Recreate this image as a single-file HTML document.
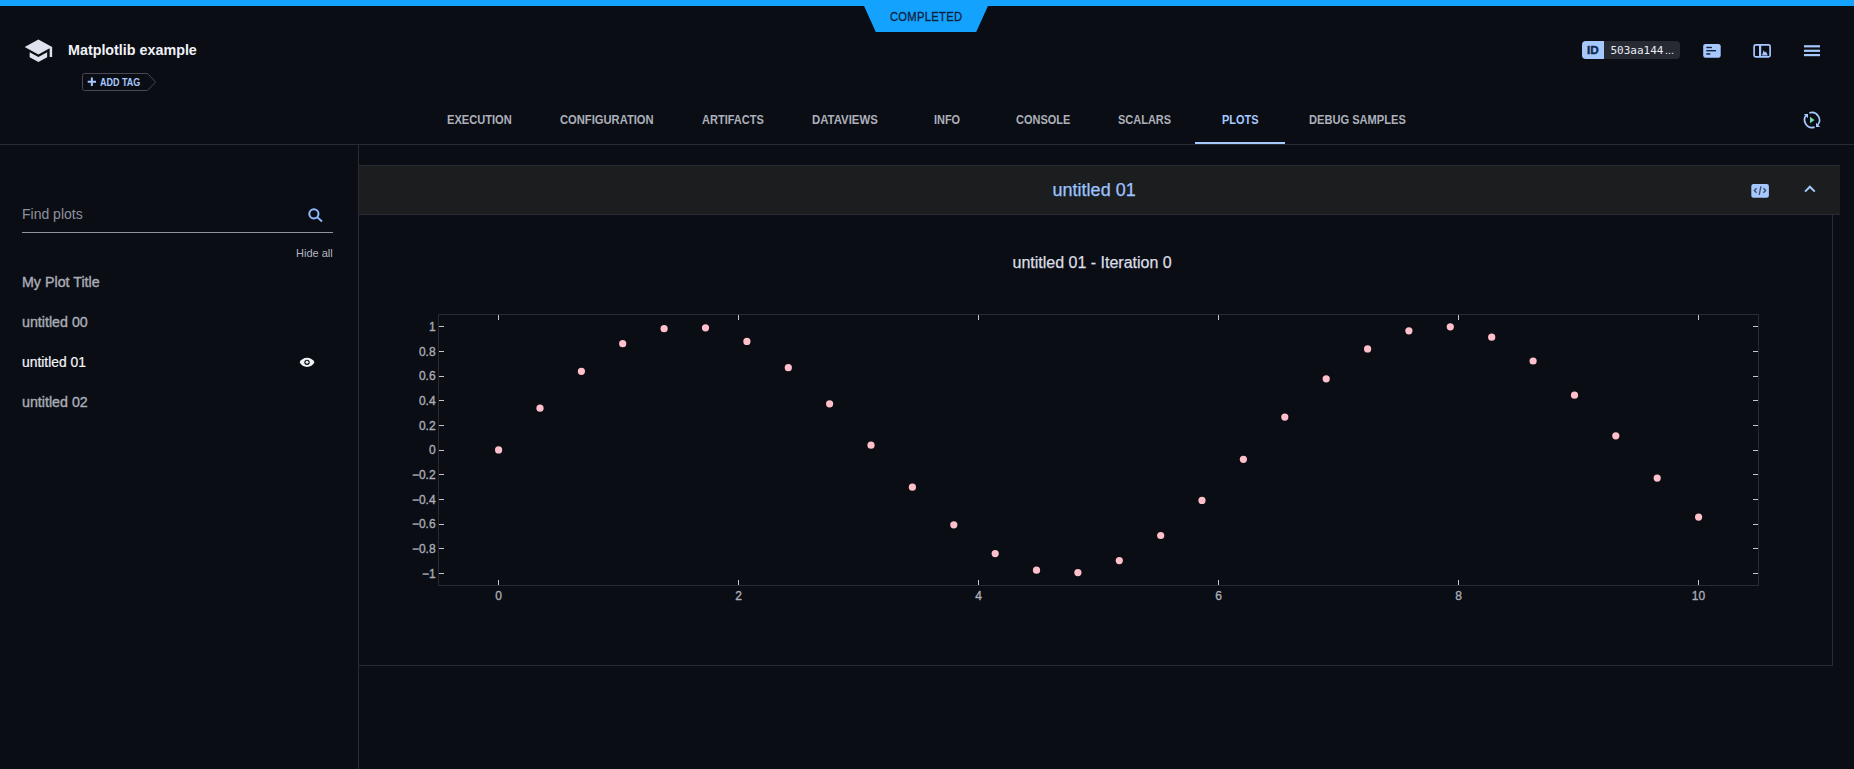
<!DOCTYPE html>
<html lang="en"><head><meta charset="utf-8"><title>Matplotlib example</title>
<style>
html,body{margin:0;padding:0}
body{width:1854px;height:769px;overflow:hidden;background:#0a0d14;font-family:"Liberation Sans",sans-serif;position:relative;color:#c3c6d2}
.a{position:absolute}
.t{position:absolute;white-space:nowrap;line-height:1;transform-origin:0 50%}
.tab{font-size:12px;font-weight:bold;color:#adb0ba;top:114px;transform:scaleX(0.925)}
.li{font-size:15px;color:#a9acb6;left:22px;-webkit-text-stroke:0.4px #a9acb6;transform:scaleX(0.95)}
svg{position:absolute;left:0;top:0;overflow:visible}
</style></head><body>
<!-- top status bar -->
<div class="a" style="left:0;top:0;width:1854px;height:6px;background:#14a2ff"></div>
<svg width="1854" height="40"><polygon points="863.6,5 988.4,5 976.2,32 875.8,32" fill="#14a2ff"/></svg>
<div class="t" id="completed" style="left:890px;top:11px;font-size:12px;color:#0c2340;letter-spacing:0.3px;-webkit-text-stroke:0.3px #0c2340;transform:scaleX(0.934)">COMPLETED</div>

<!-- header -->
<svg width="60" height="70"><g transform="translate(23.4,35.75) scale(1.25)"><path fill="#dfe2ee" d="M5 13.18v4L12 21l7-3.82v-4L12 17l-7-3.82zM12 3L1 9l11 6 9-4.91V17h2V9L12 3z"/></g></svg>
<div class="t" id="title" style="left:68px;top:42px;font-size:15px;font-weight:bold;color:#f1f2f7;transform:scaleX(0.954)">Matplotlib example</div>
<svg width="170" height="100"><path d="M84.5,73.5 H147.5 L155.5,82 L147.5,90.5 H84.5 Q82.5,90.5 82.5,88.5 V75.5 Q82.5,73.5 84.5,73.5 Z" fill="none" stroke="#474a56" stroke-width="1"/>
<path d="M87.700,81.800 H96 M91.850,77.600 V86" stroke="#a6c8ff" stroke-width="2" fill="none"/></svg>
<div class="t" id="addtag" style="left:99.5px;top:77px;font-size:10.5px;font-weight:bold;color:#a6c8ff;transform:scaleX(0.855)">ADD TAG</div>

<!-- ID chip -->
<div class="a" style="left:1582px;top:41px;width:98px;height:18px;border-radius:4px;background:#272a33"></div>
<div class="a" style="left:1582px;top:41px;width:22px;height:18px;border-radius:4px 0 0 4px;background:#a6c8ff"></div>
<div class="t" id="idl" style="left:1587px;top:44.5px;font-size:11px;font-weight:bold;color:#0e2a4d;-webkit-text-stroke:0.4px #0e2a4d;transform:scaleX(1.06)">ID</div>
<div class="t" id="idv" style="left:1610.5px;top:44.5px;font-size:11px;color:#e9ebf3;font-family:'DejaVu Sans Mono','Liberation Mono',monospace">503aa144</div>
<div class="t" id="idd" style="left:1665px;top:44.5px;font-size:11px;color:#e9ebf3">...</div>

<!-- header icons -->
<svg width="1854" height="140">
<rect x="1703.2" y="44" width="17.5" height="13.7" rx="2.2" fill="#a6c8ff"/>
<rect x="1706.3" y="46.8" width="5.6" height="1.4" fill="#16223a"/><rect x="1706.3" y="50" width="9.8" height="1.4" fill="#16223a"/><rect x="1706.3" y="53.2" width="4" height="1.5" fill="#16223a"/>
<rect x="1754.1" y="44.8" width="16" height="12.1" rx="1.6" fill="none" stroke="#a6c8ff" stroke-width="1.7"/>
<rect x="1759" y="44.8" width="2.2" height="12.1" fill="#a6c8ff"/>
<path d="M1762,55.4 L1763.6,50.3 L1765,52.6 L1766,51.4 L1767.8,55.4 Z" fill="#a6c8ff"/>
<rect x="1804" y="45.2" width="16" height="2.2" fill="#a6c8ff"/><rect x="1804" y="49.7" width="16" height="2.2" fill="#a6c8ff"/><rect x="1804" y="54" width="16" height="2.2" fill="#a6c8ff"/>
<!-- refresh icon -->
<g fill="none" stroke="#a6c8ff" stroke-width="1.7"><path d="M1806.6,114.8 A7.6,7.6 0 0 0 1814.6,127.15"/><path d="M1809.4,112.85 A7.6,7.6 0 0 1 1817.4,125.2"/></g>
<path d="M1803.8,114 L1808,114 L1808,118.2 Z" fill="#a6c8ff"/><path d="M1816,122.8 L1816,127 L1820.2,127 Z" fill="#a6c8ff"/>
<path d="M1810,116.8 L1814.6,120 L1810,123.2 Z" fill="#72d8b8"/>
</svg>

<!-- tabs -->
<div class="t tab" id="tb0" style="left:447px">EXECUTION</div>
<div class="t tab" id="tb1" style="left:560px;transform:scaleX(0.932)">CONFIGURATION</div>
<div class="t tab" id="tb2" style="left:702px;transform:scaleX(0.918)">ARTIFACTS</div>
<div class="t tab" id="tb3" style="left:812.3px;transform:scaleX(0.948)">DATAVIEWS</div>
<div class="t tab" id="tb4" style="left:933.5px;transform:scaleX(0.91)">INFO</div>
<div class="t tab" id="tb5" style="left:1016px;transform:scaleX(0.916)">CONSOLE</div>
<div class="t tab" id="tb6" style="left:1118px;transform:scaleX(0.915)">SCALARS</div>
<div class="t tab" id="tb7" style="left:1222px;color:#a6c8ff;transform:scaleX(0.916)">PLOTS</div>
<div class="t tab" id="tb8" style="left:1309px">DEBUG SAMPLES</div>
<div class="a" style="left:0;top:144px;width:1854px;height:1px;background:#282b34"></div>
<div class="a" style="left:1195px;top:142px;width:90px;height:2px;background:#a6c8ff"></div>

<!-- sidebar -->
<div class="a" style="left:358px;top:145px;width:1px;height:624px;background:#282b34"></div>
<div class="t" id="find" style="left:22px;top:207px;font-size:14px;color:#8e919c">Find plots</div>
<div class="a" style="left:22px;top:232px;width:311px;height:1px;background:#9093a0"></div>
<svg width="358" height="400"><circle cx="313.900" cy="213.850" r="4.6" fill="none" stroke="#8dbcff" stroke-width="2"/><path d="M317.200,217.100 L322,221.500" stroke="#8dbcff" stroke-width="1.9"/>
<path d="M299.600,362.350 C301.200,359.300 303.900,357.750 307.050,357.750 C310.200,357.750 312.900,359.300 314.500,362.350 C312.900,365.400 310.200,366.950 307.050,366.950 C303.900,366.950 301.200,365.400 299.600,362.350 Z" fill="#f1f2f7"/><circle cx="307" cy="362.300" r="2.65" fill="#0a0c14"/><circle cx="307" cy="362.300" r="1.45" fill="#f1f2f7"/></svg>
<div class="t" id="hide" style="left:296px;top:248px;font-size:11px;color:#b4b7c2">Hide all</div>
<div class="t li" id="li0" style="top:274.2px;transform:scaleX(0.95)">My Plot Title</div>
<div class="t li" id="li1" style="top:314.4px">untitled 00</div>
<div class="t li" id="li2" style="top:354.4px;transform:scaleX(0.925);color:#f4f5fa;-webkit-text-stroke:0.2px #f4f5fa">untitled 01</div>
<div class="t li" id="li3" style="top:394.4px">untitled 02</div>

<!-- plot header -->
<div class="a" style="left:359px;top:165px;width:1481px;height:49px;background:#1c1d1f;border-top:1px solid #282b34;border-bottom:1px solid #282b34;box-sizing:content-box;height:48px"></div>
<div class="t" id="ph" style="left:1052.6px;top:180.700px;font-size:18px;color:#9cc4ff;-webkit-text-stroke:0.25px #9cc4ff">untitled 01</div>
<svg width="1854" height="230"><rect x="1751.3" y="184" width="17.6" height="13.7" rx="2.2" fill="#a6c8ff"/>
<g stroke="#3b4b63" stroke-width="1.3" fill="none"><path d="M1756.6,188.2 L1754.3,190.5 L1756.6,192.800"/><path d="M1763.4,188.2 L1765.700,190.5 L1763.4,192.800"/><path d="M1760.900,186.4 L1759.2,194.900"/></g>
<path d="M1805,191.600 L1809.900,186.700 L1814.800,191.600" stroke="#a6c8ff" stroke-width="2" fill="none"/></svg>

<!-- plot container -->
<div class="a" style="left:1832px;top:215px;width:1px;height:451px;background:#282b34"></div>
<div class="a" style="left:359px;top:665px;width:1474px;height:1px;background:#282b34"></div>
<div class="t" id="pt" style="left:1012.5px;top:255px;font-size:16px;color:#dcdee6;-webkit-text-stroke:0.25px #dcdee6">untitled 01 - Iteration 0</div>

<svg width="1854" height="769" font-family="Liberation Sans, sans-serif" font-size="12" fill="#a9acb6" stroke="#a9acb6" stroke-width="0.35">
<rect x="438.500" y="314.500" width="1320" height="271" fill="none" stroke="#282b34" stroke-width="1"/>
<g fill="#c3c6d2" stroke="none"><rect x="498" y="315" width="1" height="5"/><rect x="498" y="580" width="1" height="5"/><rect x="738" y="315" width="1" height="5"/><rect x="738" y="580" width="1" height="5"/><rect x="978" y="315" width="1" height="5"/><rect x="978" y="580" width="1" height="5"/><rect x="1218" y="315" width="1" height="5"/><rect x="1218" y="580" width="1" height="5"/><rect x="1458" y="315" width="1" height="5"/><rect x="1458" y="580" width="1" height="5"/><rect x="1698" y="315" width="1" height="5"/><rect x="1698" y="580" width="1" height="5"/><rect x="439" y="326" width="5" height="1"/><rect x="1753" y="326" width="5" height="1"/><rect x="439" y="351" width="5" height="1"/><rect x="1753" y="351" width="5" height="1"/><rect x="439" y="376" width="5" height="1"/><rect x="1753" y="376" width="5" height="1"/><rect x="439" y="400" width="5" height="1"/><rect x="1753" y="400" width="5" height="1"/><rect x="439" y="425" width="5" height="1"/><rect x="1753" y="425" width="5" height="1"/><rect x="439" y="450" width="5" height="1"/><rect x="1753" y="450" width="5" height="1"/><rect x="439" y="474" width="5" height="1"/><rect x="1753" y="474" width="5" height="1"/><rect x="439" y="499" width="5" height="1"/><rect x="1753" y="499" width="5" height="1"/><rect x="439" y="524" width="5" height="1"/><rect x="1753" y="524" width="5" height="1"/><rect x="439" y="548" width="5" height="1"/><rect x="1753" y="548" width="5" height="1"/><rect x="439" y="573" width="5" height="1"/><rect x="1753" y="573" width="5" height="1"/></g>
<g fill="#ffc0cb" stroke="none"><circle cx="498.6" cy="449.9" r="3.6"/><circle cx="540.0" cy="408.2" r="3.6"/><circle cx="581.4" cy="371.3" r="3.6"/><circle cx="622.7" cy="343.7" r="3.6"/><circle cx="664.1" cy="328.7" r="3.6"/><circle cx="705.5" cy="327.8" r="3.6"/><circle cx="746.9" cy="341.4" r="3.6"/><circle cx="788.3" cy="367.7" r="3.6"/><circle cx="829.6" cy="403.8" r="3.6"/><circle cx="871.0" cy="445.2" r="3.6"/><circle cx="912.4" cy="487.2" r="3.6"/><circle cx="953.8" cy="524.8" r="3.6"/><circle cx="995.2" cy="553.6" r="3.6"/><circle cx="1036.5" cy="570.2" r="3.6"/><circle cx="1077.9" cy="572.6" r="3.6"/><circle cx="1119.3" cy="560.6" r="3.6"/><circle cx="1160.7" cy="535.5" r="3.6"/><circle cx="1202.0" cy="500.4" r="3.6"/><circle cx="1243.4" cy="459.3" r="3.6"/><circle cx="1284.8" cy="417.1" r="3.6"/><circle cx="1326.2" cy="378.8" r="3.6"/><circle cx="1367.6" cy="348.9" r="3.6"/><circle cx="1408.9" cy="330.8" r="3.6"/><circle cx="1450.3" cy="326.8" r="3.6"/><circle cx="1491.7" cy="337.2" r="3.6"/><circle cx="1533.1" cy="361.0" r="3.6"/><circle cx="1574.5" cy="395.2" r="3.6"/><circle cx="1615.8" cy="435.8" r="3.6"/><circle cx="1657.2" cy="478.1" r="3.6"/><circle cx="1698.6" cy="517.1" r="3.6"/></g>
<g><text x="435.6" y="331.0" text-anchor="end">1</text><text x="435.6" y="355.7" text-anchor="end">0.8</text><text x="435.6" y="380.3" text-anchor="end">0.6</text><text x="435.6" y="405.0" text-anchor="end">0.4</text><text x="435.6" y="429.6" text-anchor="end">0.2</text><text x="435.6" y="454.3" text-anchor="end">0</text><text x="435.6" y="479.0" text-anchor="end">−0.2</text><text x="435.6" y="503.6" text-anchor="end">−0.4</text><text x="435.6" y="528.3" text-anchor="end">−0.6</text><text x="435.6" y="552.9" text-anchor="end">−0.8</text><text x="435.6" y="577.6" text-anchor="end">−1</text></g><g><text x="498.5" y="600" text-anchor="middle">0</text><text x="738.5" y="600" text-anchor="middle">2</text><text x="978.5" y="600" text-anchor="middle">4</text><text x="1218.5" y="600" text-anchor="middle">6</text><text x="1458.5" y="600" text-anchor="middle">8</text><text x="1698.5" y="600" text-anchor="middle">10</text></g>
</svg>
</body></html>
